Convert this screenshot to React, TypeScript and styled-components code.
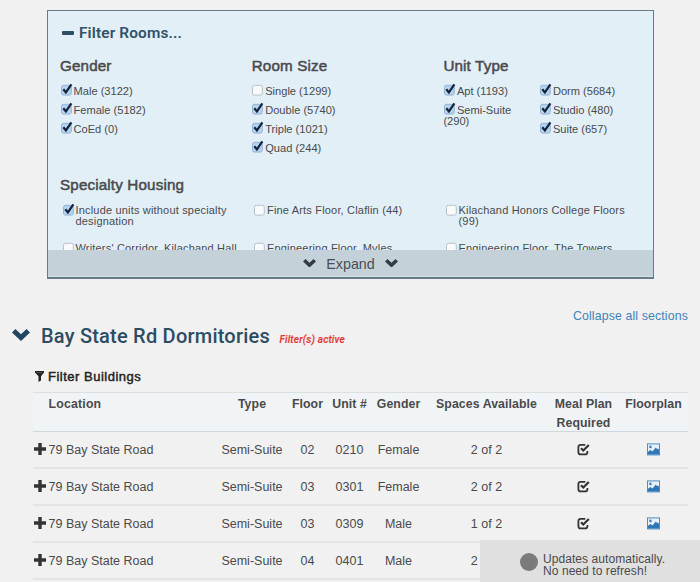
import React from "react";
import styled, { createGlobalStyle, css } from "styled-components";

const GlobalStyle = createGlobalStyle`
  *, *::before, *::after { box-sizing: border-box; }
  html, body { margin: 0; height: 100%; overflow: hidden; }
  body {
    background: #f1f1f1;
    color: #4a4a4c;
    font-family: "Liberation Sans", Arial, sans-serif;
    font-size: 12.5px;
  }
  h2, h3, h4 { margin: 0; }
`;

const Page = styled.main`
  height: 582px;
  overflow: hidden;
  padding-top: 10px;
`;

const FilterPanel = styled.section`
  display: flex;
  flex-direction: column;
  width: 607px;
  height: 269px;
  margin: 0 0 1px 47px;
  border: 2px solid #687c88;
  border-left-width: 1px;
  border-top-width: 1px;
  border-right-width: 1px;
  background: #e2eff7;
  overflow: hidden;
`;

const FilterBody = styled.div`
  height: 239px;
  overflow: hidden;
  padding: 12px 0 0 12px;
`;

const PanelTitle = styled.h2`
  display: flex;
  align-items: center;
  gap: 5px;
  height: 20px;
  padding-left: 2px;
  color: #2f5368;
  font: 600 15.4px/20px Roboto, sans-serif;
  letter-spacing: 0.15px;
`;

const GroupRow = styled.div`
  display: grid;
  grid-template-columns: 191.7px 191.7px 200px;
  height: 131px;
  padding-top: 12px;
`;

const GroupTitle = styled.h3`
  height: 26px;
  font-weight: 400;
  font-size: 15.2px;
  line-height: 22px;
  letter-spacing: 0.15px;
  white-space: nowrap;
  -webkit-text-stroke: 0.5px currentColor;
`;

const OptionColumns = styled.div`
  display: grid;
  grid-template-columns: 96px 96px;
`;

const Option = styled.label`
  display: block;
  height: 19px;
  font-size: 11.1px;
  line-height: 11px;
  padding-top: 4px;
`;

const SpecialtyGrid = styled.div`
  display: grid;
  grid-template-columns: 191.5px 191.5px 200px;
  grid-auto-rows: 38px;
  padding: 1px 0 0 1.5px;
`;

const SpecialtyOption = styled.label`
  display: flex;
  align-items: flex-start;
  padding-top: 4px;
  font-size: 11px;
  line-height: 11px;
  letter-spacing: 0.18px;
`;

const SpecialtyText = styled.span`
  width: 172px;
`;

const BoxFace = styled.svg`
  display: inline-block;
  width: 14px;
  height: 14px;
  margin: -4px 0 -3px;
  flex: none;
  overflow: visible;
  transform: translateY(1.8px);
`;

const InlineBox = styled.span`
  display: inline-flex;
  height: 9px;
  margin-left: -0.5px;
  vertical-align: 0;
`;

const ExpandBar = styled.button`
  display: flex;
  align-items: center;
  justify-content: center;
  gap: 10px;
  height: 27px;
  width: 100%;
  padding: 2px 0 0;
  border: 0;
  border-bottom: 1px solid #d3e0e6;
  background: #c5d1d8;
  color: #454f57;
  font: 14.3px/24px "Liberation Sans", Arial, sans-serif;
`;

const ChevronIcon = styled.svg<{ $size: number }>`
  width: ${(p) => p.$size}px;
  height: ${(p) => p.$size * 0.66}px;
  margin-top: -2px;
  flex: none;
`;

const CollapseRow = styled.div`
  display: flex;
  justify-content: flex-end;
  height: 44px;
  padding: 29px 12px 0 0;
`;

const CollapseLink = styled.a`
  color: #4282ba;
  font-size: 12.35px;
  line-height: 15px;
  letter-spacing: 0.12px;
`;

const SectionHeader = styled.header`
  display: flex;
  align-items: center;
  height: 24px;
  padding-left: 12px;
  color: #2c4c61;
`;

const SectionTitle = styled.h2`
  margin-left: 11px;
  width: 238.5px;
  white-space: nowrap;
  font: 500 20px/24px Roboto, sans-serif;
  letter-spacing: 0.22px;
`;

const ActiveNote = styled.em`
  padding-top: 7px;
  color: #e53935;
  font: italic 500 10px/12px Roboto, sans-serif;
  letter-spacing: 0.19px;
  -webkit-text-stroke: 0.2px currentColor;
`;

const BuildingsTitle = styled.h4`
  display: flex;
  align-items: center;
  gap: 4px;
  height: 44px;
  padding: 13px 0 0 35px;
  color: #222;
  font-weight: 400;
  font-size: 13px;
  line-height: 18px;
  letter-spacing: 0.5px;
  -webkit-text-stroke: 0.45px currentColor;
`;

const Table = styled.div`
  width: 655px;
  margin-left: 33px;
`;

const columns = css`
  display: grid;
  grid-template-columns: 183px 72px 39px 45px 53px 123px 71px 69px;
`;

const HeaderRow = styled.div`
  ${columns}
  height: 40px;
  padding-top: 2px;
  border-top: 1px solid #dedfdf;
  border-bottom: 1px solid #cfd8dc;
  background: #f0f4f6;
  font-weight: 700;
  font-size: 12.3px;
  line-height: 19px;
  letter-spacing: 0.08px;
`;

const Row = styled.div`
  ${columns}
  height: 37px;
  border-bottom: 2px solid #e4e4e4;
  line-height: 37px;
`;

const Cell = styled.div<{ $start?: boolean }>`
  display: flex;
  justify-content: ${(p) => (p.$start ? "flex-start" : "center")};
  text-align: center;
  white-space: ${(p) => (p.$start ? "nowrap" : "normal")};
`;

const HeaderLocation = styled(Cell)`
  padding-left: 15.5px;
  letter-spacing: 0.2px;
`;

const CellIcon = styled.svg`
  width: 13px;
  height: 13px;
  margin-top: 11px;
  overflow: visible;
`;

const PlusIcon = styled.svg`
  width: 12px;
  height: 12px;
  margin: 11px 2.5px 0 1px;
`;

const TitleIcon = styled.svg<{ $w: number; $h: number }>`
  width: ${(p) => p.$w}px;
  height: ${(p) => p.$h}px;
  flex: none;
`;

const UpdateNotice = styled.aside`
  position: fixed;
  right: 0;
  bottom: 0;
  display: flex;
  align-items: flex-start;
  gap: 5px;
  width: 220px;
  height: 42px;
  padding: 13px 0 0 40px;
  background: #e0e0e0;
  font-size: 12px;
  white-space: nowrap;
`;

const StatusDot = styled.span`
  width: 18px;
  height: 18px;
  border-radius: 50%;
  background: #7b7b7b;
`;

const NoticeText = styled.div`
  letter-spacing: 0.07px;
`;

const NoticeLine = styled.div`
  height: 12px;
  line-height: 12px;
`;

function Checkbox({ checked }: { checked?: boolean }) {
  return (
    <BoxFace viewBox="0 0 14 14">
      <rect
        x="1.5"
        y="2.5"
        width="9.8"
        height="9.8"
        rx="2"
        fill={checked ? "#b4d3ee" : "#f8fafb"}
        stroke={checked ? "#91add0" : "#b3bbc1"}
        strokeWidth="0.9"
      />
      {checked && (
        <path
          d="M3.3 6.4 5.9 9.6 11.4 1.5"
          fill="none"
          stroke="#14233d"
          strokeWidth="2.2"
        />
      )}
    </BoxFace>
  );
}

function Chevron({ size, color }: { size: number; color: string }) {
  return (
    <ChevronIcon $size={size} viewBox="0 0 16 10.6">
      <path d="M0 3.2 3 0 8 4.6 13 0 16 3.2 8 10.6Z" fill={color} />
    </ChevronIcon>
  );
}

type Choice = { label: string; checked: boolean };

const on = (label: string): Choice => ({ label, checked: true });
const off = (label: string): Choice => ({ label, checked: false });

const genders = [on("Male (3122)"), on("Female (5182)"), on("CoEd (0)")];
const sizes = [
  off("Single (1299)"),
  on("Double (5740)"),
  on("Triple (1021)"),
  on("Quad (244)"),
];
const unitsLeft = [on("Apt (1193)"), on("Semi-Suite (290)")];
const unitsRight = [on("Dorm (5684)"), on("Studio (480)"), on("Suite (657)")];
const specialties = [
  on("Include units without specialty designation"),
  off("Fine Arts Floor, Claflin (44)"),
  off("Kilachand Honors College Floors (99)"),
  off("Writers' Corridor, Kilachand Hall"),
  off("Engineering Floor, Myles"),
  off("Engineering Floor, The Towers"),
];

const units = [
  { floor: "02", unit: "0210", gender: "Female", spaces: "2 of 2" },
  { floor: "03", unit: "0301", gender: "Female", spaces: "2 of 2" },
  { floor: "03", unit: "0309", gender: "Male", spaces: "1 of 2" },
  { floor: "04", unit: "0401", gender: "Male", spaces: "2 of 2" },
];

function Options({ items }: { items: Choice[] }) {
  return (
    <div>
      {items.map((item) => (
        <Option key={item.label}>
          <InlineBox>
            <Checkbox checked={item.checked} />
          </InlineBox>
          {item.label}
        </Option>
      ))}
    </div>
  );
}

function Filters() {
  return (
    <FilterPanel>
      <FilterBody>
        <PanelTitle>
          <TitleIcon $w={12} $h={4} viewBox="0 0 12 4">
            <rect width="12" height="4" rx="1" fill="#2f4f63" />
          </TitleIcon>
          Filter Rooms...
        </PanelTitle>
        <GroupRow>
          <div>
            <GroupTitle>Gender</GroupTitle>
            <Options items={genders} />
          </div>
          <div>
            <GroupTitle>Room Size</GroupTitle>
            <Options items={sizes} />
          </div>
          <div>
            <GroupTitle>Unit Type</GroupTitle>
            <OptionColumns>
              <Options items={unitsLeft} />
              <Options items={unitsRight} />
            </OptionColumns>
          </div>
        </GroupRow>
        <GroupTitle>Specialty Housing</GroupTitle>
        <SpecialtyGrid>
          {specialties.map((item) => (
            <SpecialtyOption key={item.label}>
              <Checkbox checked={item.checked} />
              <SpecialtyText>{item.label}</SpecialtyText>
            </SpecialtyOption>
          ))}
        </SpecialtyGrid>
      </FilterBody>
      <ExpandBar>
        <Chevron size={13} color="#333c44" />
        Expand
        <Chevron size={13} color="#333c44" />
      </ExpandBar>
    </FilterPanel>
  );
}

function MealPlanIcon() {
  return (
    <CellIcon viewBox="0 0 13 13">
      <path
        d="M8.3 1.8H3.6Q1.4 1.8 1.4 4V9.2Q1.4 11.4 3.6 11.4H8.2Q10.4 11.4 10.4 9.2V8"
        fill="none"
        stroke="#333"
        strokeWidth="1.8"
      />
      <path d="M4 5.2 6.3 7.5 11.8 2" fill="none" stroke="#333" strokeWidth="2.2" />
    </CellIcon>
  );
}

function FloorplanIcon() {
  return (
    <CellIcon viewBox="0 0 13 13">
      <rect x="0.5" y="0.9" width="12" height="11" fill="#e8f1f8" stroke="#4d8cc6" />
      <circle cx="3.4" cy="3.9" r="1.3" fill="#3c7fbe" />
      <path d="M1 11.5V8.8L3.5 7 5.5 8.5 8.8 4.6 10 6 11 5.5 12 7V11.5Z" fill="#2f76b8" />
    </CellIcon>
  );
}

function UnitTable() {
  return (
    <Table>
      <HeaderRow>
        <HeaderLocation $start>Location</HeaderLocation>
        <Cell>Type</Cell>
        <Cell>Floor</Cell>
        <Cell>Unit #</Cell>
        <Cell>Gender</Cell>
        <Cell>Spaces Available</Cell>
        <Cell>Meal Plan Required</Cell>
        <Cell>Floorplan</Cell>
      </HeaderRow>
      {units.map((u) => (
        <Row key={u.unit}>
          <Cell $start>
            <PlusIcon viewBox="0 0 12 12">
              <path d="M4.3 0H7.7V4.3H12V7.7H7.7V12H4.3V7.7H0V4.3H4.3Z" fill="#333" />
            </PlusIcon>
            79 Bay State Road
          </Cell>
          <Cell>Semi-Suite</Cell>
          <Cell>{u.floor}</Cell>
          <Cell>{u.unit}</Cell>
          <Cell>{u.gender}</Cell>
          <Cell>{u.spaces}</Cell>
          <Cell>
            <MealPlanIcon />
          </Cell>
          <Cell>
            <FloorplanIcon />
          </Cell>
        </Row>
      ))}
    </Table>
  );
}

export default function App() {
  return (
    <Page>
      <GlobalStyle />
      <Filters />
      <CollapseRow>
        <CollapseLink>Collapse all sections</CollapseLink>
      </CollapseRow>
      <SectionHeader>
        <Chevron size={18} color="#204660" />
        <SectionTitle>Bay State Rd Dormitories</SectionTitle>
        <ActiveNote>Filter(s) active</ActiveNote>
      </SectionHeader>
      <BuildingsTitle>
        <TitleIcon $w={9} $h={11} viewBox="0 0 9 11">
          <path d="M0 0H9V1.4L6 5.2V9.5L3.5 11V5.2L0 1.4Z" fill="#222" />
          <path d="M1.8 1.6H7.2" stroke="#777" strokeWidth="0.6" />
        </TitleIcon>
        Filter Buildings
      </BuildingsTitle>
      <UnitTable />
      <UpdateNotice>
        <StatusDot />
        <NoticeText>
          <NoticeLine>Updates automatically.</NoticeLine>
          <NoticeLine>No need to refresh!</NoticeLine>
        </NoticeText>
      </UpdateNotice>
    </Page>
  );
}
